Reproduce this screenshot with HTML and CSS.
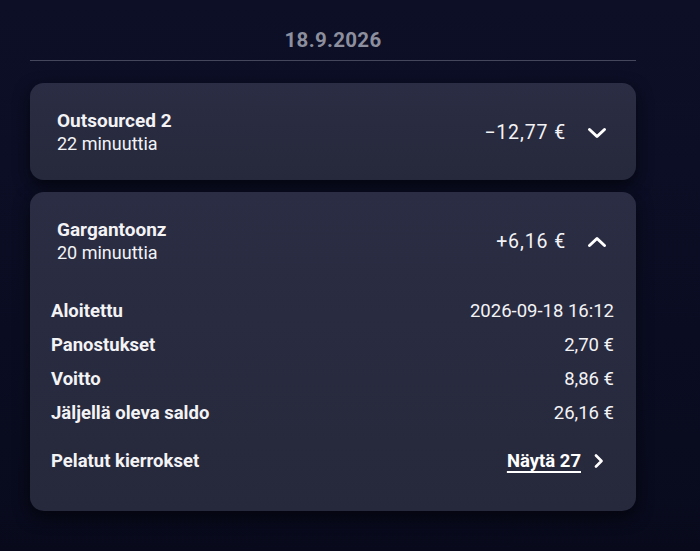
FILE: index.html
```html
<!DOCTYPE html>
<html lang="fi">
<head>
<meta charset="utf-8">
<title>Pelihistoria</title>
<link rel="stylesheet" href="styles.css">
</head>
<body>
<main class="page">
  <h2 class="day">18.9.2026</h2>

  <section class="card">
    <div class="card-head">
      <div class="game">
        <div class="game-name">Outsourced 2</div>
        <div class="game-time">22 minuuttia</div>
      </div>
      <div class="result">
        <span class="amount">−12,77 €</span>
        <svg class="chev" width="20" height="12" viewBox="0 0 20 12"><path d="M2.5 2.5 L10 9.5 L17.5 2.5" fill="none" stroke="#fff" stroke-width="3" stroke-linecap="round" stroke-linejoin="round"/></svg>
      </div>
    </div>
  </section>

  <section class="card open">
    <div class="card-head">
      <div class="game">
        <div class="game-name">Gargantoonz</div>
        <div class="game-time">20 minuuttia</div>
      </div>
      <div class="result">
        <span class="amount">+6,16 €</span>
        <svg class="chev" width="20" height="12" viewBox="0 0 20 12"><path d="M2.5 9.5 L10 2.5 L17.5 9.5" fill="none" stroke="#fff" stroke-width="3" stroke-linecap="round" stroke-linejoin="round"/></svg>
      </div>
    </div>
    <div class="details">
      <div class="row"><span class="label">Aloitettu</span><span class="value">2026-09-18 16:12</span></div>
      <div class="row"><span class="label">Panostukset</span><span class="value">2,70 €</span></div>
      <div class="row"><span class="label">Voitto</span><span class="value">8,86 €</span></div>
      <div class="row"><span class="label">Jäljellä oleva saldo</span><span class="value">26,16 €</span></div>
      <div class="row rounds"><span class="label">Pelatut kierrokset</span>
        <a class="show" href="#">Näytä 27 <svg class="chev-r" width="10" height="14" viewBox="0 0 10 14"><path d="M2 1.5 L7.5 7 L2 12.5" fill="none" stroke="#fff" stroke-width="2.6" stroke-linecap="round" stroke-linejoin="round"/></svg></a>
      </div>
    </div>
  </section>
</main>
</body>
</html>
```
FILE: styles.css
```css
html, body {
  margin: 0;
  height: 100%;
}
body {
  background: linear-gradient(180deg, #0c0f26 0%, #0a0d22 60%, #080a1c 100%);
  font-family: Roboto, "Open Sans", "DejaVu Sans", sans-serif;
  color: #f3f3f6;
}
.page {
  width: 606px;
  padding: 27px 0 0 30px;
}
.day {
  margin: 0;
  text-align: center;
  font-size: 20.5px;
  font-weight: 700;
  line-height: 26px;
  letter-spacing: 0.3px;
  color: #8d8f9e;
  padding-bottom: 7px;
  border-bottom: 1px solid #45475c;
}
.card {
  margin-top: 22px;
  background: linear-gradient(180deg, #2b2d44 0%, #26283b 100%);
  border-radius: 14px;
  box-shadow: 0 6px 16px rgba(0, 0, 0, 0.55);
}
.card + .card {
  margin-top: 12px;
}
.card-head {
  height: 97px;
  display: flex;
  align-items: center;
  justify-content: space-between;
  padding: 0 29px 0 27px;
}
.game-name {
  font-size: 19px;
  font-weight: 700;
  line-height: 23px;
}
.game-time {
  font-size: 18px;
  line-height: 23px;
}
.result {
  display: flex;
  align-items: center;
  gap: 21px;
  padding-top: 2px;
}
.amount {
  font-size: 19.5px;
  letter-spacing: 0.9px;
}
.chev {
  display: block;
}
.details {
  padding: 5px 22px 33px 21px;
}
.row {
  display: flex;
  justify-content: space-between;
  align-items: center;
  height: 34px;
  font-size: 18.5px;
}
.label {
  font-weight: 700;
}
.rounds {
  margin-top: 14px;
}
.show {
  display: flex;
  align-items: center;
  gap: 13px;
  margin-right: 10px;
  color: #fff;
  font-weight: 700;
  text-decoration: underline;
  text-underline-offset: 4px;
  text-decoration-thickness: 2px;
}
.chev-r {
  display: block;
}
```
